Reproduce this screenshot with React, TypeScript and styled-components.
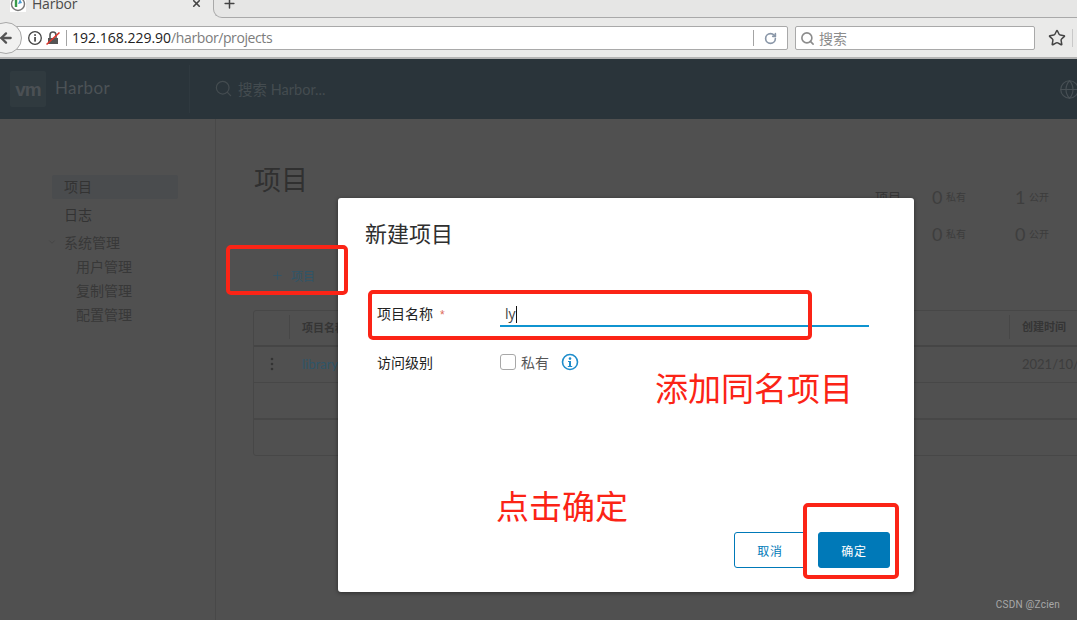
import React from 'react';
import styled, { createGlobalStyle } from 'styled-components';
import { ArrowLeft, ChevronDown, Globe, Plus, RotateCw, Search, Star, X } from 'lucide-react';

const GlobalStyle = createGlobalStyle`
  html, body { margin: 0; padding: 0; background: #505050; }
  * { box-sizing: border-box; }
`;

const UI_FONT = `"Open Sans", "Noto Sans CJK SC", sans-serif`;
const CJK_FONT = `"Liberation Sans", "Noto Sans CJK SC", sans-serif`;

const Screen = styled.div`
  position: relative;
  width: 1077px;
  height: 620px;
  overflow: hidden;
  background: #505050;
  font-family: ${CJK_FONT};
`;

/* browser chrome */
const TabStrip = styled.div`
  height: 18px;
  background: #eaeae9;
  display: flex;
  overflow: hidden;
`;

const Tab = styled.div`
  width: 213px;
  height: 18px;
  flex: none;
  display: flex;
  align-items: flex-start;
  padding-left: 10px;
`;

const Favicon = styled.svg`
  width: 16px;
  height: 16px;
  margin-top: -4px;
  flex: none;
  background: #fff;
`;

const TabTitle = styled.span`
  font: 14px/20px ${UI_FONT};
  color: #4a4a4a;
  letter-spacing: -0.2px;
  margin: -6px 0 0 6px;
  flex: 1;
`;

const TabClose = styled.span`
  display: flex;
  margin: -2px 11px 0 0;
  color: #444;
`;

const NewTabArea = styled.div`
  flex: 1;
  height: 18px;
  background: #e6e6e5;
  border-left: 1px solid #a9a9a9;
  border-bottom: 1px solid #a9a9a9;
  border-bottom-left-radius: 9px;
  padding-left: 8px;
`;

const NewTab = styled.span`
  display: flex;
  margin-top: -4px;
  color: #444;
`;

const Toolbar = styled.div`
  height: 41px;
  background: #eaeae9;
  border-bottom: 2px solid #b4b4b4;
  display: flex;
  align-items: center;
  padding-top: 1px;
`;

const BackButton = styled.div`
  width: 32px;
  height: 32px;
  flex: none;
  margin-left: -10px;
  border-radius: 50%;
  background: #f1f1f0;
  border: 1px solid #a8a8a8;
  display: flex;
  align-items: center;
  justify-content: center;
  color: #555;
  position: relative;
  z-index: 1;
`;

const UrlBar = styled.div`
  width: 778px;
  height: 24px;
  margin-left: -12px;
  padding-left: 16px;
  background: #fff;
  border: 1px solid #a9a9a9;
  border-radius: 2px;
  display: flex;
  align-items: center;
`;

const UrlDivider = styled.span`
  width: 1px;
  height: 16px;
  background: #a4a4a4;
  flex: none;
`;

const UrlHost = styled.span`
  font: 14px/20px ${UI_FONT};
  color: #222;
  margin-left: 5px;
`;

const UrlPath = styled.span`
  font: 14px/20px ${UI_FONT};
  letter-spacing: -0.4px;
  color: #7c7c7c;
  flex: 1;
`;

const ReloadSlot = styled.span`
  width: 33px;
  display: flex;
  justify-content: center;
  color: #8a97a8;
`;

const SearchBar = styled.div`
  width: 240px;
  height: 24px;
  margin-left: 7px;
  padding-left: 4px;
  background: #fff;
  border: 1px solid #a9a9a9;
  border-radius: 2px;
  display: flex;
  align-items: center;
  gap: 4px;
  color: #8c8c8c;
  font-size: 14px;
`;

const StarSlot = styled.span`
  display: flex;
  margin-left: 13px;
  color: #444;
`;

const ToolbarDivider = styled.span`
  width: 1px;
  height: 18px;
  margin-left: 6px;
  background: #c8c8c8;
`;

/* dimmed harbor page */
const AppHeader = styled.header`
  height: 60px;
  background: #2a343a;
  display: flex;
  align-items: center;
  padding-left: 10px;
`;

const LogoBox = styled.div`
  width: 36px;
  height: 36px;
  background: #303a3f;
  border-radius: 2px;
  display: flex;
  align-items: center;
  justify-content: center;
  font: 700 19px/1 "Liberation Sans", sans-serif;
  letter-spacing: -1px;
  color: #4b5054;
`;

const Brand = styled.span`
  width: 135px;
  height: 48px;
  margin-left: 9px;
  border-right: 1px solid #2f393f;
  font: 17px/46px Lato, sans-serif;
  letter-spacing: 0.4px;
  color: #4c5256;
`;

const HeaderSearch = styled.div`
  display: flex;
  align-items: center;
  gap: 5px;
  margin-left: 24px;
  padding-bottom: 1px;
  color: #444c50;
  font: 14.5px Lato, "Noto Sans CJK SC", sans-serif;
  flex: 1;
`;

const GlobeSlot = styled.span`
  display: flex;
  margin-right: -3px;
  color: #485055;
`;

const Body = styled.div`
  display: flex;
  height: 501px;
`;

const Sidebar = styled.nav`
  width: 216px;
  flex: none;
  border-right: 1px solid #484848;
  padding: 56px 0 0 52px;
  font-size: 14px;
  color: #333;
`;

const NavItem = styled.div<{ $active?: boolean }>`
  width: 126px;
  height: 24px;
  line-height: 24px;
  padding-left: 12px;
  margin-bottom: 4px;
  border-radius: 2px;
  background: ${p => (p.$active ? '#4a4c4e' : 'transparent')};
`;

const NavGroup = styled.div`
  display: flex;
  align-items: center;
  height: 24px;
  color: #383838;
  margin: -1px 0 1px -5px;
  gap: 7px;
`;

const NavChild = styled.div`
  height: 24px;
  line-height: 24px;
  padding-left: 24px;
  color: #383838;
`;

const Content = styled.main`
  flex: 1;
  min-width: 0;
  padding: 42px 0 0 37px;
`;

const TitleRow = styled.div`
  display: flex;
  justify-content: space-between;
  height: 102px;
`;

const PageTitle = styled.h1`
  margin: 0 0 0 1px;
  font-size: 27px;
  font-weight: 400;
  line-height: 40px;
  color: #303030;
`;

const Stats = styled.div`
  width: 202px;
  padding-top: 17px;
  display: grid;
  grid-template-columns: 57px 83px 62px;
  grid-auto-rows: 37px;
  font-size: 10px;
  color: #3c3c3c;
  align-items: center;
`;

const StatLabel = styled.span`
  font-size: 13px;
  color: #363636;
`;

const StatCell = styled.span`
  display: flex;
  align-items: center;
  gap: 4px;
  white-space: nowrap;
`;

const StatNumber = styled.b`
  width: 10px;
  text-align: right;
  font: 400 18px/1 Lato, sans-serif;
  color: #3e3e3e;
`;

const AddButton = styled.div`
  display: flex;
  align-items: center;
  gap: 7px;
  height: 24px;
  padding-left: 18px;
  margin-bottom: 23px;
  font-size: 12px;
  color: #2f5568;
`;

const Table = styled.div`
  width: 900px;
  border: 1px solid #474747;
  border-radius: 3px;
  font-size: 11px;
`;

const HeadRow = styled.div`
  display: flex;
  align-items: center;
  height: 36px;
  padding-bottom: 2px;
  border-bottom: 2px solid #454545;
  font-weight: 700;
  color: #353535;
`;

const ActionCell = styled.div<{ $head?: boolean }>`
  width: 36px;
  height: 24px;
  display: flex;
  align-items: center;
  justify-content: center;
  flex: none;
  border-right: 1px solid ${p => (p.$head ? '#474747' : 'transparent')};
`;

const NameCell = styled.div`
  width: 719px;
  padding-left: 12px;
  flex: none;
`;

const DateCell = styled.div<{ $head?: boolean }>`
  padding-left: 12px;
  border-left: 1px solid ${p => (p.$head ? '#474747' : 'transparent')};
  line-height: 24px;
  white-space: nowrap;
`;

const DataRow = styled.div`
  display: flex;
  align-items: center;
  height: 36px;
  padding-bottom: 2px;
  border-bottom: 1px solid #474747;
  font: 13px Lato, sans-serif;
  color: #3d3d3d;
`;

const ProjectLink = styled.span`
  color: #2f5568;
`;

const EmptyRow = styled.div`
  height: 37px;
  border-bottom: 2px solid #474747;
`;

const FooterRow = styled.div`
  height: 35px;
`;

const Kebab = styled.svg`
  width: 4px;
  height: 14px;
  margin-left: 1px;
  color: #333;
`;

/* dialog */
const Modal = styled.section`
  position: absolute;
  left: 338px;
  top: 198px;
  width: 576px;
  height: 394px;
  background: #fff;
  border-radius: 3px;
  box-shadow: 0 1px 4px rgba(0, 0, 0, 0.45);
  padding: 24px 24px 24px 27px;
  display: flex;
  flex-direction: column;
`;

const ModalTitle = styled.h2`
  margin: 0;
  font-size: 22px;
  font-weight: 400;
  line-height: 26px;
  color: #2f2f2f;
`;

const FormRow = styled.div<{ $first?: boolean }>`
  display: flex;
  align-items: center;
  height: 26px;
  margin: ${p => (p.$first ? '52px' : '23px')} 0 0 12px;
`;

const FieldLabel = styled.label`
  width: 123px;
  flex: none;
  font-size: 14px;
  color: #222;
`;

const Required = styled.span`
  margin-left: 7px;
  color: #dd6a5b;
  font-size: 12px;
`;

const NameInput = styled.div`
  width: 369px;
  height: 27px;
  margin-top: 1px;
  padding: 4px 0 0 5px;
  border-bottom: 2px solid #0f94d0;
  font: 14px/20px ${UI_FONT};
  color: #444;
  display: flex;
`;

const Caret = styled.span`
  width: 1px;
  height: 17px;
  margin-top: 2px;
  background: #111;
`;

const CheckBox = styled.span`
  width: 16px;
  height: 16px;
  border: 1px solid #a8a8a8;
  border-radius: 3px;
  flex: none;
`;

const CheckLabel = styled.span`
  margin-left: 5px;
  font-size: 14px;
  color: #565656;
`;

const InfoIcon = styled.svg`
  width: 18px;
  height: 18px;
  margin-left: 12px;
`;

const ModalActions = styled.div`
  margin-top: auto;
  display: flex;
  justify-content: flex-end;
  gap: 12px;
`;

const ActionButton = styled.button<{ $primary?: boolean }>`
  width: 72px;
  height: 36px;
  border-radius: 3px;
  border: 1px solid #0079b8;
  background: ${p => (p.$primary ? '#0079b8' : '#fff')};
  color: ${p => (p.$primary ? '#fff' : '#0079b8')};
  font-family: inherit;
  font-size: 12px;
  letter-spacing: 0.7px;
  padding: 0;
`;

/* red annotations drawn over the screenshot */
const Mark = styled.div<{ $x: number; $y: number; $w: number; $h: number }>`
  position: absolute;
  left: ${p => p.$x}px;
  top: ${p => p.$y}px;
  width: ${p => p.$w}px;
  height: ${p => p.$h}px;
  border: 4px solid #fb2416;
  border-radius: 5px;
`;

const Note = styled.div<{ $x: number; $y: number }>`
  position: absolute;
  left: ${p => p.$x}px;
  top: ${p => p.$y}px;
  font-size: 33px;
  line-height: 40px;
  color: #fb2416;
  white-space: nowrap;
`;

const Watermark = styled.div`
  position: absolute;
  right: 17px;
  bottom: 8px;
  font: 10px/14px Roboto, sans-serif;
  letter-spacing: 0.2px;
  color: #a8a8a8;
`;

const App: React.FC = () => (
  <Screen>
    <GlobalStyle />

    <TabStrip>
      <Tab>
        <Favicon viewBox="0 0 16 16">
          <circle cx="8" cy="8" r="6.5" fill="none" stroke="#777" strokeWidth="1.4" />
          <path d="M6 3 L6 11" stroke="#3a9a4a" strokeWidth="2.4" />
          <path d="M10 3 L12 7 L8 8 Z" fill="#4a9ad0" />
        </Favicon>
        <TabTitle>Harbor</TabTitle>
        <TabClose><X size={11} strokeWidth={3.5} /></TabClose>
      </Tab>
      <NewTabArea>
        <NewTab><Plus size={15} strokeWidth={2.4} /></NewTab>
      </NewTabArea>
    </TabStrip>

    <Toolbar>
      <BackButton><ArrowLeft size={16} strokeWidth={3.4} /></BackButton>
      <UrlBar>
        <svg width="16" height="16" viewBox="0 0 16 16">
          <circle cx="8" cy="8" r="6.3" fill="none" stroke="#444" strokeWidth="1.3" />
          <rect x="7.2" y="7" width="1.7" height="4.6" fill="#444" />
          <rect x="7.2" y="4.2" width="1.7" height="1.7" fill="#444" />
        </svg>
        <svg width="16" height="16" viewBox="0 0 16 16" style={{ marginLeft: 2 }}>
          <path d="M3 8h10v6H3z" fill="#555" />
          <path d="M5 8V5a3 3 0 0 1 6 0v3" fill="none" stroke="#555" strokeWidth="1.6" />
          <path d="M1.5 14.5 L14.5 2.5" stroke="#e0352b" strokeWidth="1.6" />
        </svg>
        <span style={{ width: 5 }} />
        <UrlDivider />
        <UrlHost>192.168.229.90</UrlHost>
        <UrlPath>/harbor/projects</UrlPath>
        <UrlDivider />
        <ReloadSlot><RotateCw size={13} strokeWidth={3} /></ReloadSlot>
      </UrlBar>
      <SearchBar>
        <Search size={15} strokeWidth={2.6} />
        搜索
      </SearchBar>
      <StarSlot><Star size={18} strokeWidth={2} /></StarSlot>
      <ToolbarDivider />
    </Toolbar>

    <AppHeader>
      <LogoBox>vm</LogoBox>
      <Brand>Harbor</Brand>
      <HeaderSearch>
        <Search size={19} strokeWidth={1.5} />
        搜索 Harbor...
      </HeaderSearch>
      <GlobeSlot><Globe size={21} strokeWidth={1.3} /></GlobeSlot>
    </AppHeader>

    <Body>
      <Sidebar>
        <NavItem $active>项目</NavItem>
        <NavItem>日志</NavItem>
        <NavGroup>
          <ChevronDown size={10} color="#444" />
          系统管理
        </NavGroup>
        <NavChild>用户管理</NavChild>
        <NavChild>复制管理</NavChild>
        <NavChild>配置管理</NavChild>
      </Sidebar>

      <Content>
        <TitleRow>
          <PageTitle>项目</PageTitle>
          <Stats>
            <StatLabel>项目</StatLabel>
            <StatCell><StatNumber>0</StatNumber> 私有</StatCell>
            <StatCell><StatNumber>1</StatNumber> 公开</StatCell>
            <StatCell />
            <StatCell><StatNumber>0</StatNumber> 私有</StatCell>
            <StatCell><StatNumber>0</StatNumber> 公开</StatCell>
          </Stats>
        </TitleRow>
        <AddButton>
          <Plus size={13} strokeWidth={1.6} />
          项目
        </AddButton>
        <Table>
          <HeadRow>
            <ActionCell $head />
            <NameCell>项目名称</NameCell>
            <DateCell $head>创建时间</DateCell>
          </HeadRow>
          <DataRow>
            <ActionCell>
              <Kebab viewBox="0 0 4 14">
                <circle cx="2" cy="2" r="1.3" fill="currentColor" />
                <circle cx="2" cy="7" r="1.3" fill="currentColor" />
                <circle cx="2" cy="12" r="1.3" fill="currentColor" />
              </Kebab>
            </ActionCell>
            <NameCell><ProjectLink>library</ProjectLink></NameCell>
            <DateCell>2021/10/</DateCell>
          </DataRow>
          <EmptyRow />
          <FooterRow />
        </Table>
      </Content>
    </Body>

    <Modal>
      <ModalTitle>新建项目</ModalTitle>
      <FormRow $first>
        <FieldLabel>项目名称<Required>*</Required></FieldLabel>
        <NameInput>ly<Caret /></NameInput>
      </FormRow>
      <FormRow>
        <FieldLabel>访问级别</FieldLabel>
        <CheckBox />
        <CheckLabel>私有</CheckLabel>
        <InfoIcon viewBox="0 0 18 18">
          <circle cx="9" cy="9" r="7.5" fill="none" stroke="#1f8dcb" strokeWidth="1.6" />
          <circle cx="9" cy="5.6" r="1.3" fill="#1f8dcb" />
          <path d="M7 8h3v5h1.2v1H6.8v-1H8V9H7z" fill="#1f8dcb" />
        </InfoIcon>
      </FormRow>
      <ModalActions>
        <ActionButton>取消</ActionButton>
        <ActionButton $primary>确定</ActionButton>
      </ModalActions>
    </Modal>

    <Mark $x={226} $y={245} $w={122} $h={50} />
    <Mark $x={368} $y={290} $w={444} $h={50} />
    <Mark $x={803} $y={503} $w={96} $h={76} />
    <Note $x={655} $y={370}>添加同名项目</Note>
    <Note $x={496} $y={488}>点击确定</Note>
    <Watermark>CSDN @Zcien</Watermark>
  </Screen>
);

export default App;
